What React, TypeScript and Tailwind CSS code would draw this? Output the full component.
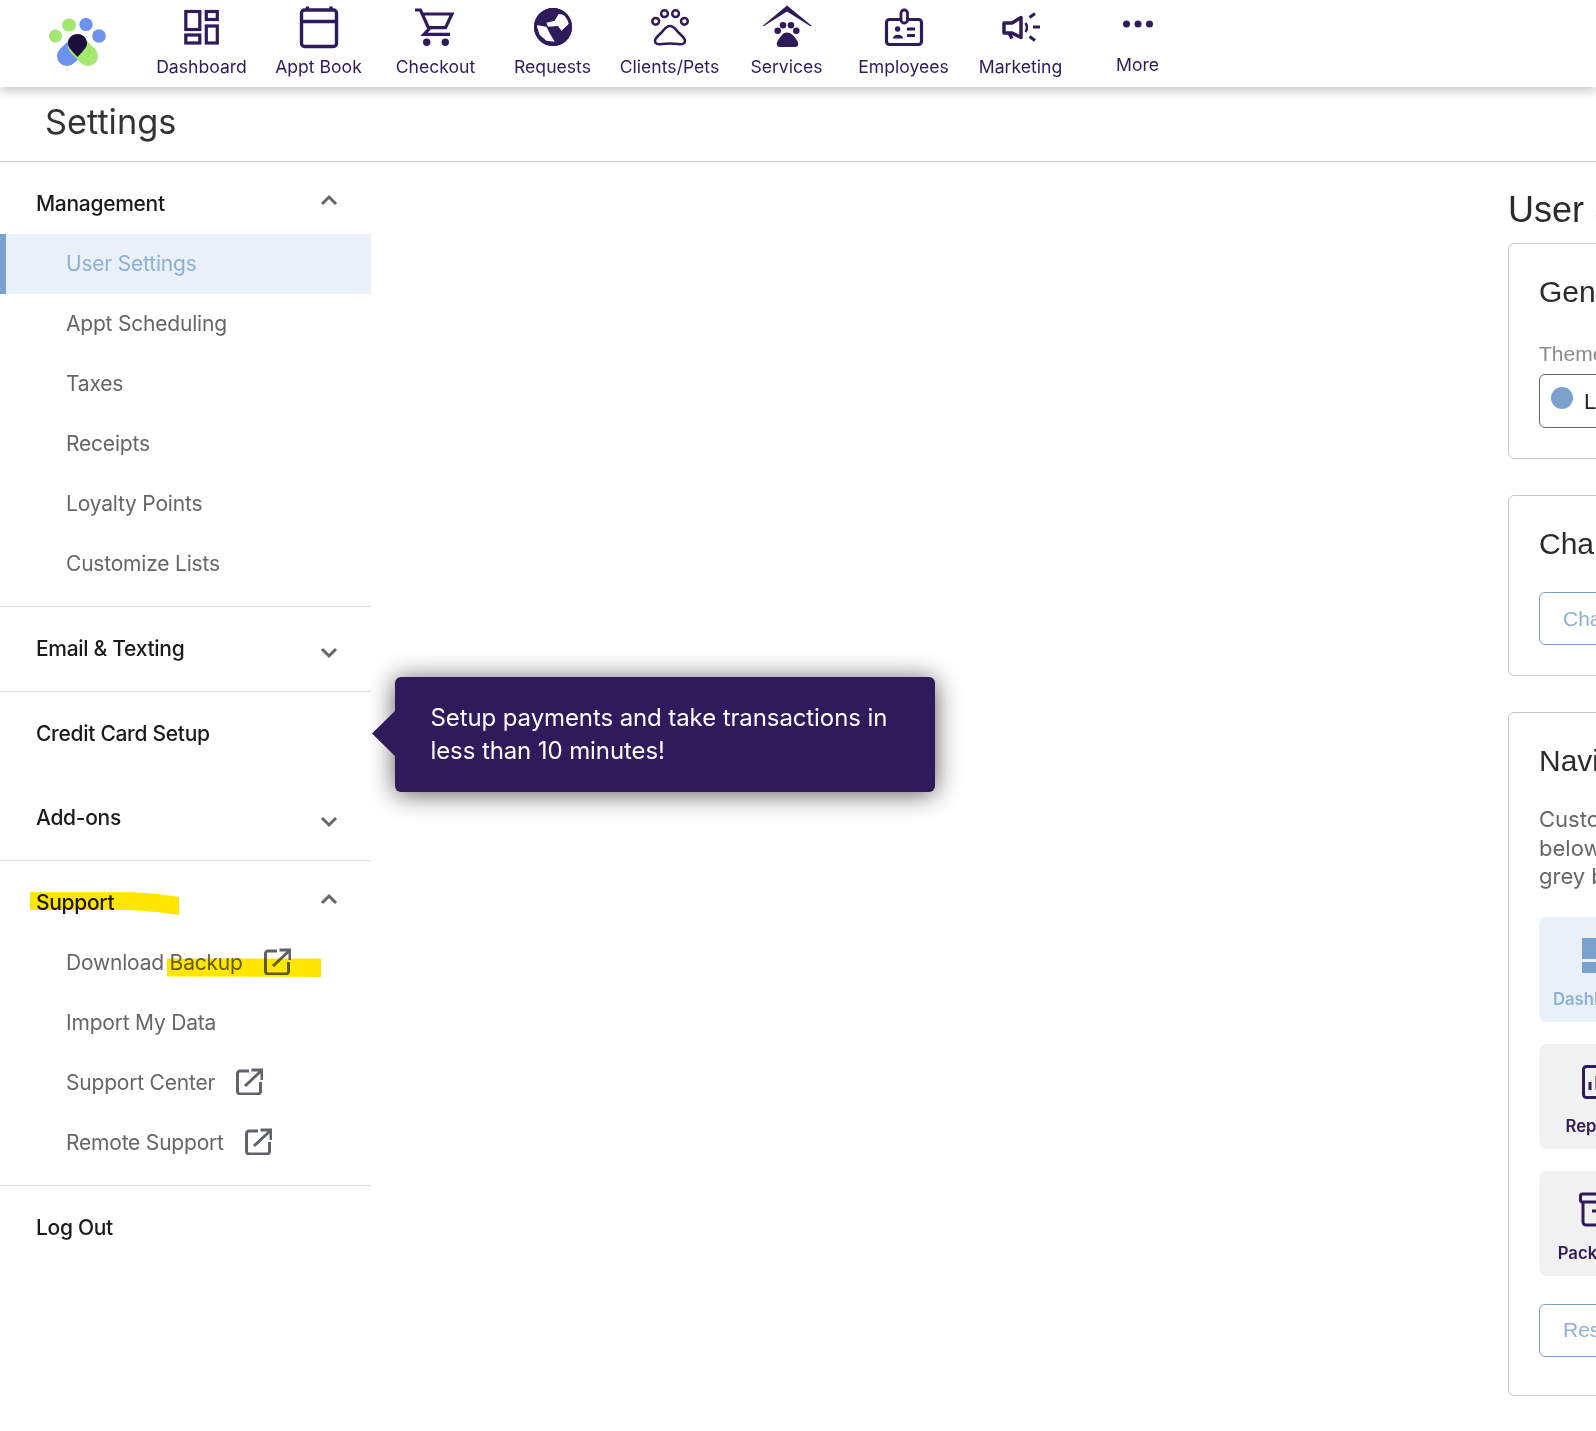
import React from "react";

const P = "#2f1a5c";
const SANS = "font-['Inter','Liberation_Sans',sans-serif]";

function I({ children, className = "" }: { children: React.ReactNode; className?: string }) {
  return (
    <svg viewBox="0 0 60 50" width="60" height="50" className={className} fill="none">
      {children}
    </svg>
  );
}

const navIcons: Record<string, React.ReactNode> = {
  Dashboard: (
    <I>
      <g transform="translate(12.3 10)" stroke={P} strokeWidth="3.2">
        <rect x="1.500" y="1.500" width="14" height="18" />
        <rect x="22" y="1.500" width="11" height="8" />
        <rect x="1.500" y="25" width="14" height="8" />
        <rect x="22" y="16" width="11" height="17" />
      </g>
    </I>
  ),
  "Appt Book": (
    <I>
      <rect x="12.500" y="10" width="35" height="36.500" rx="3" stroke={P} strokeWidth="3.400" />
      <path d="M12.500 21.500H47.500M18.500 6.500V10M42 6.500V10" stroke={P} strokeWidth="3.400" />
    </I>
  ),
  Checkout: (
    <I>
      <path d="M9 10H14.500L23 29L18 34.300H44M17 14H46L39.500 27.700H23" stroke={P} strokeWidth="3.200" />
      <circle cx="20.700" cy="42.300" r="3.700" fill={P} />
      <circle cx="39.300" cy="42.300" r="3.700" fill={P} />
    </I>
  ),
  Requests: (
    <I>
      <circle cx="30" cy="27" r="19" fill={P} />
      <path d="M13.400 25L23.400 26.700L26.700 33.300L31.700 41.700L23.400 40.700L16.700 35Z" fill="#fff" />
      <path d="M23.400 22.700L31.700 20.700L35.700 14L42.400 15L47 22.700L38.400 30.700L35 26L25 26.700Z" fill="#fff" />
      <circle cx="30" cy="27" r="17.500" stroke={P} strokeWidth="3" />
    </I>
  ),
  "Clients/Pets": (
    <I>
      <g stroke={P} strokeWidth="2.500">
        <circle cx="15.700" cy="21.300" r="3.400" />
        <circle cx="24.500" cy="13.700" r="3.400" />
        <circle cx="35.600" cy="13.700" r="3.400" />
        <circle cx="44.400" cy="21.300" r="3.400" />
        <path d="M30 26C26 26 24 30 21 33C18 36 15 38 15 41C15 44 18 44.500 22 44C27 43.500 33 43.500 38 44C42 44.500 45 44 45 41C45 38 42 36 39 33C36 30 34 26 30 26Z" />
      </g>
    </I>
  ),
  Services: (
    <I>
      <g fill={P}>
        <polygon points="30,5.500 55,26 53,26 30,11.500 7,26 5.500,26" />
        <circle cx="20.700" cy="30.700" r="3.300" />
        <circle cx="26" cy="25.300" r="3.300" />
        <circle cx="34" cy="25.300" r="3.300" />
        <circle cx="39.300" cy="30.700" r="3.300" />
        <path d="M30 32.500C26 32.500 24 36 21.500 39.500C19 43 19 47 23 47H38C42 47 42 43 39.500 39.500C37 36 34 32.500 30 32.500Z" />
      </g>
    </I>
  ),
  Employees: (
    <I>
      <rect x="12.500" y="19.500" width="35" height="25" rx="3" stroke={P} strokeWidth="3.200" />
      <rect x="27" y="10" width="6.500" height="13" rx="3" stroke={P} strokeWidth="2.800" fill="#fff" />
      <circle cx="23.600" cy="29" r="2.700" fill={P} />
      <path d="M19 38.500C19 33.500 29 33.500 29 38.500Z" fill={P} />
      <path d="M33 29H41M33 35.500H41" stroke={P} strokeWidth="2.800" />
    </I>
  ),
  Marketing: (
    <I>
      <path d="M13 23H21L30 17.500V37.500L21 33H13ZM18 33L21 38.500" stroke={P} strokeWidth="3.500" strokeLinejoin="round" />
      <path d="M34.500 23C36.500 26 36.500 29 34.500 32" stroke={P} strokeWidth="2.500" />
      <path d="M38.500 17.500L44 13.500M42 27H49M38.500 36.500L44 40.500" stroke={P} strokeWidth="3" />
    </I>
  ),
  More: (
    <I>
      <circle cx="18.500" cy="24" r="3.500" fill={P} />
      <circle cx="30" cy="24" r="3.500" fill={P} />
      <circle cx="41.500" cy="24" r="3.500" fill={P} />
    </I>
  ),
};

const nav = ["Dashboard", "Appt Book", "Checkout", "Requests", "Clients/Pets", "Services", "Employees", "Marketing", "More"];

function Chevron({ up }: { up?: boolean }) {
  return (
    <svg width="20" height="20" viewBox="0 0 20 20" fill="none" className={up ? "mt-[-2px]" : "mt-[6px]"}>
      <path d={up ? "M3 14L10 7L17 14" : "M3 6L10 13L17 6"} stroke="#666" strokeWidth="3" />
    </svg>
  );
}

function Ext() {
  return (
    <svg width="27" height="27" viewBox="0 0 27 27" fill="none" className="ml-[21px] mt-[-3px] shrink-0">
      <path d="M13 3H4A2.500 2.500 0 0 0 1.500 5.500V23.500A2.500 2.500 0 0 0 4 26H22A2.500 2.500 0 0 0 24.500 23.500V14" stroke="#5f6368" strokeWidth="3" />
      <path d="M9 18L25 3M15.500 2H26V12" stroke="#5f6368" strokeWidth="3" />
    </svg>
  );
}

function Head({ label, chev }: { label: string; chev?: "up" | "down" }) {
  const open = chev === "up";
  return (
    <div className={`flex items-start justify-between pl-[36px] pr-[32px] pt-[30px] ${open ? "h-[72px]" : "h-[84px]"}`}>
      <span className="text-[21px] leading-[24px] font-medium tracking-[-0.3px] text-[#1a1a1a]">{label}</span>
      {chev && <Chevron up={open} />}
    </div>
  );
}

function Sub({ label, active, ext }: { label: string; active?: boolean; ext?: boolean }) {
  return (
    <div
      className={`flex h-[60px] items-center text-[21px] tracking-[-0.2px] ${
        active ? "border-l-[6px] border-[#7aa2cc] bg-[#eaf0f8] pl-[60px] text-[#8eb0d6]" : "pl-[66px] text-[#666666]"
      }`}
    >
      <span>{label}</span>
      {ext && <Ext />}
    </div>
  );
}

function Card({ children, className = "" }: { children: React.ReactNode; className?: string }) {
  return <section className={`rounded-[6px] border border-[#c6c6c6] pl-[30px] ${className}`}>{children}</section>;
}

function Title({ children }: { children: React.ReactNode }) {
  return <h2 className="font-['Liberation_Sans',sans-serif] text-[30px] leading-[32px] text-[#2b2b2b]">{children}</h2>;
}

function OutlineBtn({ children }: { children: React.ReactNode }) {
  return (
    <button className="flex h-[53px] w-[220px] items-center rounded-[6px] border border-[#7aa2cc] pl-[23px] font-['Liberation_Sans',sans-serif] text-[21px] text-[#8eb0d6]">
      {children}
    </button>
  );
}

function Tile({ label, icon, active }: { label: string; icon: React.ReactNode; active?: boolean }) {
  return (
    <div className={`flex h-[105px] w-[116px] flex-col items-center rounded-[8px] pt-[20px] ${active ? "bg-[#eaf0f8]" : "bg-[#f1f1f1]"}`}>
      {icon}
      <span className={`mt-[16.500px] whitespace-nowrap text-[16.700px] leading-[20px] font-semibold ${active ? "text-[#8eb0d6]" : "text-[#2f1a5c]"}`}>
        {label}
      </span>
    </div>
  );
}

export default function App() {
  return (
    <div className={`relative flex h-[1431px] w-full flex-col overflow-hidden bg-white ${SANS}`}>
      <header className="relative z-10 flex h-[87px] shrink-0 bg-white shadow-[0_4px_10px_rgba(0,0,0,0.22)]">
        <div className="flex w-[143px] shrink-0 items-start pl-[49px] pt-[18px]">
          <svg width="58" height="49" viewBox="49 18 58 49" fill="none">
            <ellipse cx="69" cy="25" rx="7" ry="6.600" fill="#a3e86e" />
            <ellipse cx="86" cy="24.500" rx="6.600" ry="6.600" fill="#6b93ee" />
            <circle cx="55.500" cy="36" r="6.500" fill="#a3e86e" />
            <circle cx="99" cy="36" r="6.800" fill="#6b93ee" />
            <path d="M77.500 46L67 56" stroke="#6b93ee" strokeWidth="20" strokeLinecap="round" />
            <path d="M78 46L88 56" stroke="#a3e86e" strokeWidth="20" strokeLinecap="round" />
            <path d="M77.500 34C72 34 68 38 68 43C68 47 70 49 77.500 57C85 49 87 47 87 43C87 38 83 34 77.500 34Z" fill="#1d0f3d" />
          </svg>
        </div>
        {nav.map((n) => (
          <div key={n} className="flex w-[117px] shrink-0 flex-col items-center">
            {navIcons[n]}
            <span className={`whitespace-nowrap text-[17.600px] leading-[24px] text-[#2f1a5c] ${n === "More" ? "mt-[3px]" : "mt-[5px]"}`}>{n}</span>
          </div>
        ))}
      </header>

      <div className="flex h-[75px] shrink-0 items-center border-b border-[#cccccc] pb-[5px] pl-[45px]">
        <h1 className="text-[34.300px] leading-[40px] text-[#333333]">Settings</h1>
      </div>

      <div className="flex min-h-0 flex-1">
        <aside className="w-[371px] shrink-0">
          <Head label="Management" chev="up" />
          <Sub label="User Settings" active />
          <Sub label="Appt Scheduling" />
          <Sub label="Taxes" />
          <Sub label="Receipts" />
          <Sub label="Loyalty Points" />
          <Sub label="Customize Lists" />
          <div className="mt-[12px] border-t border-[#e0e0e0]" />
          <Head label="Email & Texting" chev="down" />
          <div className="border-t border-[#e0e0e0]" />
          <Head label="Credit Card Setup" />
          <Head label="Add-ons" chev="down" />
          <div className="border-t border-[#e0e0e0]" />
          <Head label="Support" chev="up" />
          <Sub label="Download Backup" ext />
          <Sub label="Import My Data" />
          <Sub label="Support Center" ext />
          <Sub label="Remote Support" ext />
          <div className="mt-[12px] border-t border-[#e0e0e0]" />
          <Head label="Log Out" />
        </aside>

        <main className="min-w-0 flex-1 overflow-hidden pl-[1137px]">
          <div className="w-[900px]">
            <h2 className="mt-[28px] mb-[13px] font-['Liberation_Sans',sans-serif] text-[36px] leading-[40px] text-[#2b2b2b]">User Settings</h2>

            <Card className="h-[216px] pt-[32px]">
              <Title>General</Title>
              <div className="mt-[34px] font-['Liberation_Sans',sans-serif] text-[21px] leading-[24px] text-[#8a8a8a]">Theme</div>
              <div className="mt-[8px] flex h-[54px] w-[300px] items-center rounded-[6px] border border-[#666666] pl-[11px]">
                <span className="mt-[-6px] h-[22px] w-[22px] rounded-full bg-[#7aa2cc]" />
                <span className="ml-[11px] font-['Liberation_Sans',sans-serif] text-[22px] text-[#222222]">Light</span>
              </div>
            </Card>

            <Card className="mt-[36px] h-[181px] pt-[32px]">
              <Title>Change Password</Title>
              <div className="mt-[32px]">
                <OutlineBtn>Change Password</OutlineBtn>
              </div>
            </Card>

            <Card className="mt-[36px] h-[684px] pt-[32px]">
              <Title>Navigation</Title>
              <div className="mt-[28px] whitespace-nowrap text-[22px] leading-[28.500px] text-[#666666]">
                <div>Customize your navigation bar by dragging the items</div>
                <div>below. Items in the navigation are highlighted and</div>
                <div>grey boxes are hidden.</div>
              </div>
              <div className="mt-[26px] flex flex-col gap-[22px]">
                <Tile
                  active
                  label="Dashboard"
                  icon={
                    <svg width="34" height="36" viewBox="0 0 34 36" fill="#7aa2cc">
                      <rect x="2" y="1" width="14" height="21" />
                      <rect x="2" y="25" width="14" height="11" />
                      <rect x="20" y="1" width="12" height="11" />
                      <rect x="20" y="15" width="12" height="21" />
                    </svg>
                  }
                />
                <Tile
                  label="Reports"
                  icon={
                    <svg width="34" height="36" viewBox="0 0 34 36" fill="none" stroke={P} strokeWidth="3">
                      <rect x="3.500" y="2.500" width="27" height="31" rx="3" />
                      <path d="M10 18V26M17 12V26M24 21V26" />
                    </svg>
                  }
                />
                <Tile
                  label="Packages"
                  icon={
                    <svg width="36" height="36" viewBox="0 0 36 36" fill="none" stroke={P} strokeWidth="3">
                      <rect x="1.500" y="3" width="33" height="8" rx="2" />
                      <path d="M4 11V31A3 3 0 0 0 7 34H29A3 3 0 0 0 32 31V11M13 20H23" />
                    </svg>
                  }
                />
              </div>
              <div className="mt-[28px]">
                <OutlineBtn>Reset</OutlineBtn>
              </div>
            </Card>
          </div>
        </main>
      </div>

      {/* Tooltip over the sidebar item */}
      <div className="absolute left-[395px] top-[677px] z-20 h-[115px] w-[540px] rounded-[6px] bg-[#2f1a5c] pl-[35.500px] pt-[24px] text-[24px] leading-[33px] tracking-[-0.1px] text-white shadow-[0_2px_26px_rgba(0,0,0,0.65)]">
        <svg width="24" height="47" viewBox="0 0 24 47" className="absolute left-[-23.500px] top-[33px]">
          <path d="M24 0V47L0 23.500Z" fill="#2f1a5c" />
        </svg>
        <div className="whitespace-nowrap">Setup payments and take transactions in</div>
        <div className="whitespace-nowrap">less than 10 minutes!</div>
      </div>

      {/* Hand-drawn highlighter marks */}
      <svg width="330" height="980" viewBox="0 0 330 980" className="pointer-events-none absolute left-0 top-0 z-30 mix-blend-multiply">
        <path d="M30 892.300H133C150 893 165 895 179 897V915C160 912 140 910 117 910H30Z" fill="#ffe600" />
        <path d="M167 958.500H321V977L167 976.500Z" fill="#ffe600" />
      </svg>
    </div>
  );
}
